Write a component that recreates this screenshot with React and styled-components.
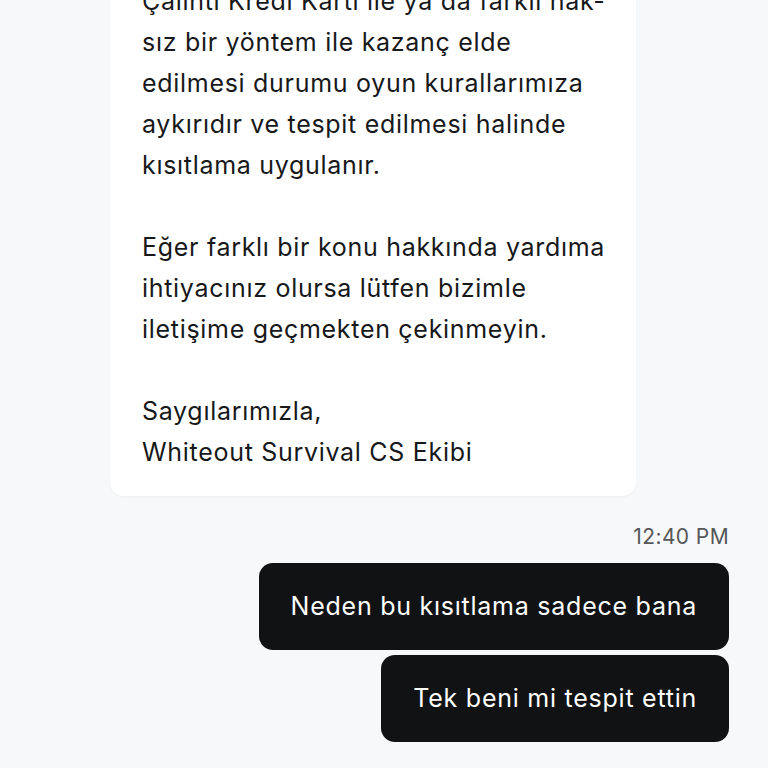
import React from 'react';
import styled, { createGlobalStyle } from 'styled-components';

const GlobalStyle = createGlobalStyle`
  html, body {
    margin: 0;
    padding: 0;
    background: #f7f8fa;
  }
  body {
    font-family: Inter, "Noto Sans", sans-serif;
    -webkit-font-smoothing: antialiased;
  }
`;

const Screen = styled.div`
  height: 768px;
  overflow: hidden;
  display: flex;
  flex-direction: column;
  justify-content: flex-end;
  padding: 0 39px 26px 110px;
  box-sizing: border-box;
`;

const AgentCard = styled.div`
  width: 526px;
  box-sizing: border-box;
  background: #ffffff;
  border-radius: 14px;
  padding: 18px 16px 23px 32px;
  box-shadow: 0 1px 3px rgba(0, 0, 0, 0.04);
  flex-shrink: 0;
`;

const Paragraph = styled.p`
  margin: 0 0 41px;
  font-size: 25px;
  line-height: 41px;
  color: #17181a;
  letter-spacing: 0.7px;
  white-space: nowrap;

  &:last-child {
    margin-bottom: 0;
  }
`;

const Time = styled.div`
  align-self: flex-end;
  margin-top: 29px;
  font-size: 21px;
  line-height: 24px;
  letter-spacing: 0.4px;
  color: #555759;
`;

const Outgoing = styled.div`
  align-self: flex-end;
  margin-top: ${(props) => props.gap}px;
  background: #111214;
  color: #ffffff;
  border-radius: 14px;
  padding: 23px 32px;
  font-size: 25px;
  line-height: 41px;
  letter-spacing: 0.75px;
  white-space: nowrap;
`;

const lines = (arr) =>
  arr.map((l, i) => (
    <React.Fragment key={i}>
      {l}
      {i < arr.length - 1 && <br />}
    </React.Fragment>
  ));

export default function App() {
  return (
    <>
      <GlobalStyle />
      <Screen>
        <AgentCard>
          <Paragraph>
            {lines([
              'Hesabınızda yapılan incelemede',
              'Çalıntı Kredi Kartı ile ya da farklı hak-',
              'sız bir yöntem ile kazanç elde',
              'edilmesi durumu oyun kurallarımıza',
              'aykırıdır ve tespit edilmesi halinde',
              'kısıtlama uygulanır.',
            ])}
          </Paragraph>
          <Paragraph>
            {lines([
              'Eğer farklı bir konu hakkında yardıma',
              'ihtiyacınız olursa lütfen bizimle',
              'iletişime geçmekten çekinmeyin.',
            ])}
          </Paragraph>
          <Paragraph>
            {lines(['Saygılarımızla,', 'Whiteout Survival CS Ekibi'])}
          </Paragraph>
        </AgentCard>
        <Time>12:40 PM</Time>
        <Outgoing gap={14}>Neden bu kısıtlama sadece bana</Outgoing>
        <Outgoing gap={5}>Tek beni mi tespit ettin</Outgoing>
      </Screen>
    </>
  );
}
